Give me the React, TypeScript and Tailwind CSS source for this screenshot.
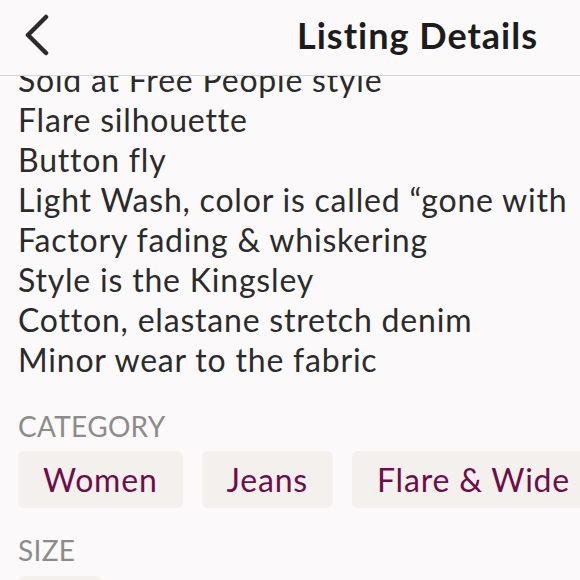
import React from "react";

const lines = [
  "Sold at Free People style",
  "Flare silhouette",
  "Button fly",
  "Light Wash, color is called \u201Cgone with",
  "Factory fading & whiskering",
  "Style is the Kingsley",
  "Cotton, elastane stretch denim",
  "Minor wear to the fabric",
];

const categories = ["Women", "Jeans", "Flare & Wide Leg"];

function Chip({ label }: { label: string }) {
  return (
    <div className="shrink-0 h-[57px] px-[25px] flex items-center rounded-[6px] bg-[#f4f0ee] text-[32px] tracking-[0.8px] text-[#6c0f48] whitespace-nowrap">
      {label}
    </div>
  );
}

export default function App() {
  return (
    <div className="w-[580px] h-[580px] overflow-hidden bg-[#fcf9fa] font-['Lato',sans-serif] text-[#2b2b2b]">
      {/* header */}
      <header className="relative z-10 h-[76px] flex items-center justify-between pl-[24px] pr-[42px] border-b border-[#d8d5d6] bg-[#fcf9fa]">
        <svg width="26" height="42" viewBox="0 0 26 42" fill="none" className="mt-[-6px]">
          <path d="M22 3 L4 21 L22 39" stroke="#2b2b2b" strokeWidth="4.5" strokeLinecap="round" strokeLinejoin="round" />
        </svg>
        <h1 className="text-[36px] font-bold text-[#1c1c1c] tracking-[1px] mt-[-6px]">Listing Details</h1>
      </header>

      <main className="h-[504px] overflow-hidden">
        <div className="mt-[-16px] pl-[18px]">
          <div className="text-[32px] tracking-[0.8px] leading-[40px]">
            {lines.map((l) => (
              <p key={l} className="whitespace-nowrap">{l}</p>
            ))}
          </div>

          <h2 className="mt-[30px] text-[28px] tracking-[0.3px] leading-[32px] text-[#8e8b8b] uppercase">Category</h2>
          <div className="mt-[9px] flex gap-[19px]">
            {categories.map((c) => (
              <Chip key={c} label={c} />
            ))}
          </div>

          <h2 className="mt-[26px] text-[28px] tracking-[0.3px] leading-[32px] text-[#8e8b8b] uppercase">Size</h2>
          <div className="mt-[10px] flex gap-[19px]">
            <div className="w-[84px] h-[56px] rounded-[6px] bg-[#f4f0ee]" />
          </div>
        </div>
      </main>
    </div>
  );
}
